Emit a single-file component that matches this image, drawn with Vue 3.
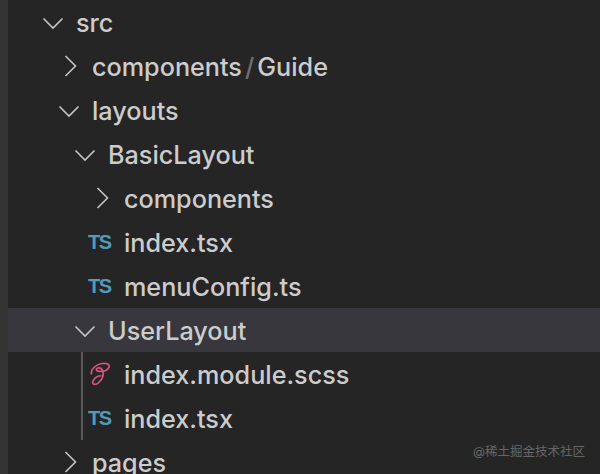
<template>
  <div class="sidebar">
    <div class="activity"></div>
    <div class="tree">
      <div
        v-for="row in rows"
        :key="row.id"
        class="row"
        :class="{ active: row.active }"
        :style="{ paddingLeft: row.indent + 'px' }"
      >
        <span v-if="row.guide" class="guide"></span>
        <svg v-if="row.type === 'open'" class="twistie" viewBox="0 0 24 24">
          <path d="M3.500 8.500 13 18 22.500 8.500" />
        </svg>
        <svg v-else-if="row.type === 'closed'" class="twistie" viewBox="0 0 24 24">
          <path d="M9.500 2 19.500 12 9.500 22" />
        </svg>
        <span v-else-if="row.type === 'ts'" class="ts">TS</span>
        <svg v-else class="sass" viewBox="0 0 24 24">
          <path d="M3.500 12.500C2 7.500 8 2.500 14 1.500c5-.8 8 .8 7 3.800-1 3-6 4.700-10 4-3.200-.6-3.500-2.700-1.200-3.300 4-1 6.500 3 5 8.500-1.400 5-6.500 9-9.300 7.600-2.200-1.100.2-5.800 4-7.600 1.800-.8 3.300-.9 4-.5" />
        </svg>
        <span class="label">{{ row.name }}<template v-if="row.sub"><span class="sep">/</span>{{ row.sub }}</template></span>
      </div>
    </div>
    <div class="watermark">@稀土掘金技术社区</div>
  </div>
</template>

<script setup>
const rows = [
  { id: 1, name: "src", type: "open", indent: 32 },
  { id: 2, name: "components", sub: "Guide", type: "closed", indent: 48 },
  { id: 3, name: "layouts", type: "open", indent: 48 },
  { id: 4, name: "BasicLayout", type: "open", indent: 64 },
  { id: 5, name: "components", type: "closed", indent: 80 },
  { id: 6, name: "index.tsx", type: "ts", indent: 80 },
  { id: 7, name: "menuConfig.ts", type: "ts", indent: 80 },
  { id: 8, name: "UserLayout", type: "open", indent: 64, active: true },
  { id: 9, name: "index.module.scss", type: "sass", indent: 80, guide: true },
  { id: 10, name: "index.tsx", type: "ts", indent: 80, guide: true },
  { id: 11, name: "pages", type: "closed", indent: 48 },
];
</script>

<style>
html,
body {
  margin: 0;
  background: #252526;
}
</style>

<style scoped>
.sidebar {
  position: relative;
  display: flex;
  width: 600px;
  height: 474px;
  overflow: hidden;
  background: #252526;
  font-family: Inter, "Noto Sans CJK SC", sans-serif;
}

.activity {
  width: 8px;
  flex-shrink: 0;
  background: #333334;
}

.tree {
  flex: 1;
}

.row {
  position: relative;
  display: flex;
  align-items: center;
  height: 44px;
  box-sizing: border-box;
  color: #cccccc;
  font-size: 25.2px;
  font-weight: 450;
}

.active {
  background: #37373d;
}

.guide {
  position: absolute;
  left: 73px;
  top: 0;
  bottom: 0;
  width: 2px;
  background: #585858;
}

.twistie {
  width: 24px;
  height: 24px;
  margin-right: 12px;
  flex-shrink: 0;
  fill: none;
  stroke: #c5c5c5;
  stroke-width: 1.6;
}

.ts {
  width: 24px;
  margin-right: 12px;
  flex-shrink: 0;
  color: #519aba;
  font-family: "Liberation Sans", sans-serif;
  font-size: 20px;
  font-weight: 700;
  letter-spacing: -1.500px;
  text-align: left;
}

.sass {
  width: 24px;
  height: 24px;
  margin-right: 12px;
  flex-shrink: 0;
  fill: none;
  stroke: #d9537f;
  stroke-width: 1.7;
}

.label {
  padding-top: 1px;
  white-space: nowrap;
}

.sep {
  margin: 0 3px;
  color: #6e6e6e;
}

.watermark {
  position: absolute;
  right: 15px;
  bottom: 14px;
  color: #666666;
  font-size: 12.5px;
  font-weight: 400;
  line-height: 16px;
}
</style>
